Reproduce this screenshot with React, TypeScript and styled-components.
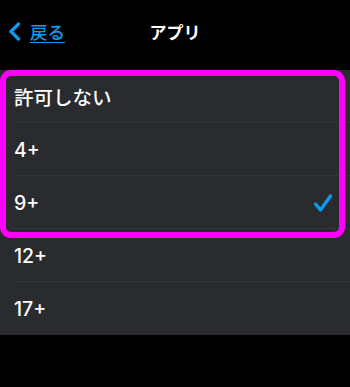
import styled, { createGlobalStyle } from "styled-components";

const GlobalStyle = createGlobalStyle`
  body {
    margin: 0;
    background: #000;
    font-family: "Inter", "Noto Sans CJK JP", sans-serif;
    -webkit-font-smoothing: antialiased;
  }
`;

const Screen = styled.div`
  width: 350px;
  height: 387px;
  background: #000;
  overflow: hidden;
`;

const Header = styled.header`
  display: grid;
  grid-template-columns: 1fr auto 1fr;
  align-items: center;
  height: 70px;
  padding: 0 0 7px 0;
  box-sizing: border-box;
`;

const BackButton = styled.a`
  display: flex;
  align-items: center;
  gap: 9px;
  padding-left: 8px;
  color: #0b9cf2;
  font-size: 17.5px;
  font-weight: 500;
  text-decoration: underline;
  text-underline-offset: 3px;
  text-decoration-thickness: 1px;

  & svg {
    flex: none;
  }
`;

const Title = styled.h1`
  margin: 0;
  color: #fff;
  font-size: 17px;
  font-weight: 700;
`;

const ListWrap = styled.div`
  position: relative;
`;

const List = styled.ul`
  margin: 0;
  padding: 0;
  list-style: none;
  background: #2a2b2e;
`;

const Row = styled.li<{ $last?: boolean }>`
  position: relative;
  display: flex;
  align-items: center;
  justify-content: space-between;
  height: 53px;
  padding: 0 17px 0 14px;
  color: #fff;
  font-size: 19.5px;
  font-weight: 500;

  &::after {
    content: "";
    display: ${(p) => (p.$last ? "none" : "block")};
    position: absolute;
    left: 14px;
    right: 0;
    bottom: 0;
    height: 1px;
    background: #35363a;
  }
`;

const Highlight = styled.div`
  position: absolute;
  top: 0;
  left: 0;
  width: 345px;
  height: 168px;
  box-sizing: border-box;
  border: 6.5px solid #ff00ff;
  border-radius: 11px;
  pointer-events: none;
`;

const items = ["許可しない", "4+", "9+", "12+", "17+"];
const selected = "9+";

export default function App() {
  return (
    <>
      <GlobalStyle />
      <Screen>
        <Header>
          <BackButton>
            <svg width="13" height="19" viewBox="0 0 13 19">
              <path
                d="M10.5 2 L3 9.5 L10.5 17"
                fill="none"
                stroke="#0b9cf2"
                strokeWidth="3.4"
                strokeLinecap="round"
                strokeLinejoin="round"
              />
            </svg>
            戻る
          </BackButton>
          <Title>アプリ</Title>
          <div />
        </Header>
        <ListWrap>
          <List>
            {items.map((item, i) => (
              <Row key={item} $last={i === items.length - 1}>
                {item}
                {item === selected && (
                  <svg width="20" height="20" viewBox="0 0 20 20">
                    <path
                      d="M2.5 11 L7.5 17 L17.5 3"
                      fill="none"
                      stroke="#0b9cf2"
                      strokeWidth="3.4"
                      strokeLinecap="round"
                      strokeLinejoin="round"
                    />
                  </svg>
                )}
              </Row>
            ))}
          </List>
          <Highlight />
        </ListWrap>
      </Screen>
    </>
  );
}
